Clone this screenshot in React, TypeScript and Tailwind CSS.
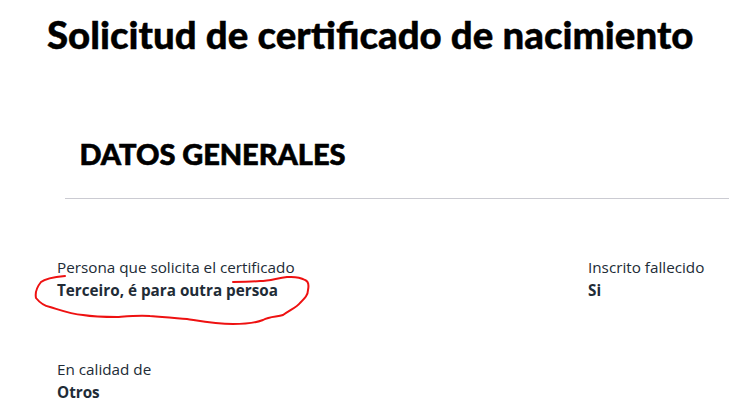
import React from "react";

function Field({ label, value }: { label: string; value: string }) {
  return (
    <div className="text-[15.25px] leading-[23px] text-[#212b36]">
      <div>{label}</div>
      <div className="font-bold">{value}</div>
    </div>
  );
}

export default function App() {
  return (
    <div className="relative h-[418px] w-[729px] overflow-hidden bg-white font-['Open_Sans',sans-serif]">
      <h1 className="pl-[47px] pt-[11px] font-['Lato',sans-serif] text-[38.4px] font-black leading-[46px] text-black [-webkit-text-stroke:0.4px_black]">
        Solicitud de certificado de nacimiento
      </h1>

      <div className="mt-[79px] pl-[65px]">
        <h2 className="pl-[14.5px] font-['Lato',sans-serif] text-[29px] font-black leading-[36px] tracking-[-0.05px] text-black [-webkit-text-stroke:0.6px_black]">
          DATOS GENERALES
        </h2>
        <div className="mt-[26px] border-t border-[#cbcbd2]" />
      </div>

      <div className="mt-[57px] flex pl-[57px]">
        <div className="w-[531px]">
          <Field label="Persona que solicita el certificado" value="Terceiro, é para outra persoa" />
        </div>
        <Field label="Inscrito fallecido" value="Si" />
      </div>

      <div className="mt-[56px] pl-[57px]">
        <Field label="En calidad de" value="Otros" />
      </div>

      {/* hand drawn circle on top of the first field */}
      <svg className="absolute left-0 top-0" width="729" height="418" fill="none">
        <path
          d="M65 276 C55 277 46 278 41 282 C37 287 35 293 36 298 C40 303 45 306 50 307 C60 310 70 314 83 315 C95 317 105 317 117 317 C130 316 140 315 150 316 C165 317 175 318 187 319 C200 321 215 324 233 324 C245 324 255 323 263 320 C270 316 277 317 283 315 C290 310 297 307 300 303 C305 298 308 295 308 290 C309 285 308 281 305 280 C298 276 292 277 287 277 C277 278 270 281 260 281 C250 282 240 282 233 282"
          stroke="#ee1111"
          strokeWidth="2"
          strokeLinecap="round"
        />
      </svg>
    </div>
  );
}
